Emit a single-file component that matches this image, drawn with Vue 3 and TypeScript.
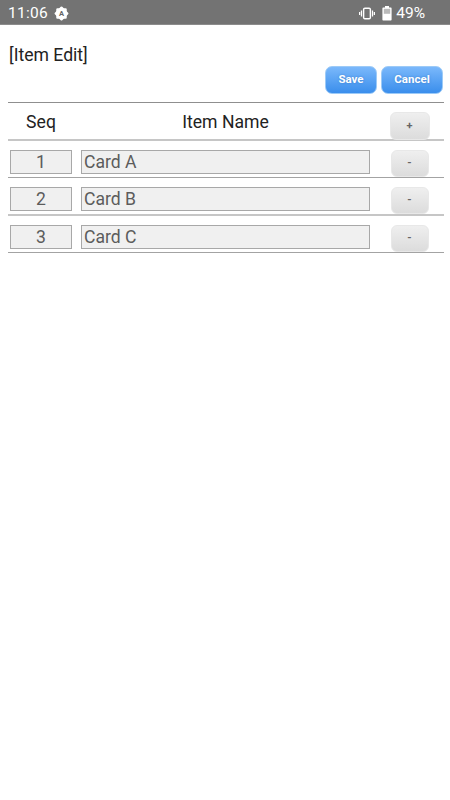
<script setup lang="ts">
const items = [
  { seq: 1, name: 'Card A' },
  { seq: 2, name: 'Card B' },
  { seq: 3, name: 'Card C' },
]
</script>

<template>
  <div class="page">
    <div class="status">
      <div class="status-left">
        <span class="time">11:06</span>
        <svg class="auto" viewBox="0 0 16 16" width="15" height="15">
          <rect x="2.4" y="2.4" width="11.2" height="11.2" rx="1.2" fill="#fff" />
          <rect x="2.4" y="2.4" width="11.2" height="11.2" rx="1.2" fill="#fff" transform="rotate(45 8 8)" />
          <text x="8" y="11" text-anchor="middle" class="auto-a">A</text>
        </svg>
      </div>
      <div class="status-right">
        <svg viewBox="0 0 18 14" width="16" height="13">
          <rect x="5.2" y="1" width="7.6" height="12" rx="1.4" fill="none" stroke="#fff" stroke-width="1.6" />
          <path fill="none" stroke="#fff" stroke-width="1.4" d="M2.8 3.6v6.8M.7 5.2v3.6M15.2 3.6v6.8M17.3 5.2v3.6" />
        </svg>
        <svg class="battery" viewBox="0 0 10 15" width="10" height="15">
          <path fill="#fff" d="M3 0h4v1.4h1.6c.6 0 1 .4 1 1v11.2c0 .6-.4 1-1 1H1.4c-.6 0-1-.4-1-1V2.4c0-.6.4-1 1-1H3z" />
          <path fill="#757575" opacity=".5" d="M1.8 2.8h6.4v5H1.8z" />
        </svg>
        <span class="pct">49%</span>
      </div>
    </div>

    <div class="content">
      <div class="title">[Item Edit]</div>
      <div class="actions">
        <button class="blue save">Save</button>
        <button class="blue cancel">Cancel</button>
      </div>

      <div class="table">
        <div class="row head">
          <div class="seq-col">Seq</div>
          <div class="name-col">Item Name</div>
          <div class="btn-col"><button class="grey plus">+</button></div>
        </div>
        <div v-for="item in items" :key="item.seq" class="row">
          <div class="seq-col"><div class="field seq">{{ item.seq }}</div></div>
          <div class="name-col"><div class="field name">{{ item.name }}</div></div>
          <div class="btn-col"><button class="grey">-</button></div>
        </div>
      </div>
    </div>
  </div>
</template>

<style>
html, body { margin: 0; background: #fff; }
</style>

<style scoped>
.page {
  width: 450px;
  height: 800px;
  background: #fff;
  font-family: Roboto, "Liberation Sans", sans-serif;
  color: #222;
  overflow: hidden;
}
.status {
  height: 25px;
  box-sizing: border-box;
  background: #737373;
  border-bottom: 1px solid #8c8c8c;
  color: #fff;
  display: flex;
  justify-content: space-between;
  align-items: center;
  padding: 3px 25px 1px 8px;
}
.status-left, .status-right { display: flex; align-items: center; }
.time { font-size: 15.5px; letter-spacing: 0.3px; }
.auto { margin-left: 6px; }
.auto-a { font-size: 8px; font-weight: 700; fill: #666; font-family: Roboto, sans-serif; }
.battery { margin-left: 7px; }
.pct { font-size: 15.5px; margin-left: 4px; }
.content { padding: 0 7px 0 8px; }
.title { font-size: 17.6px; line-height: 20px; padding-top: 20px; padding-left: 1px; }
.actions {
  display: flex;
  justify-content: flex-end;
  gap: 4px;
  margin-top: 1px;
  height: 28px;
}
.blue {
  box-sizing: border-box;
  height: 28px;
  border: 1px solid #9ccaf7;
  border-radius: 7px;
  background: linear-gradient(#7ab8fb, #3a8eec);
  color: #fff;
  font-family: Roboto, sans-serif;
  font-size: 11.5px;
  font-weight: 700;
  padding: 0 0 2px;
  text-shadow: 0 0 2px rgba(30, 90, 170, .5);
}
.save { width: 52px; }
.cancel { width: 62px; }
.table {
  margin-top: 8px;
  width: 436px;
  border-top: 1px solid #8f8f8f;
}
.row {
  display: flex;
  box-sizing: border-box;
  height: 37px;
  border-bottom: 1px solid #a3a3a3;
  align-items: flex-start;
}
.row.head { height: 38px; font-size: 17.6px; border-bottom: 2px solid #c6c6c6; }
.row:nth-child(3) { height: 38px; border-bottom: 2px solid #c6c6c6; }
.seq-col { width: 66px; flex: none; text-align: center; }
.name-col { flex: none; width: 309px; text-align: center; }
.btn-col { flex: none; width: 61px; display: flex; justify-content: center; padding-right: 8px; box-sizing: border-box; }
.head .seq-col { padding-top: 9px; line-height: 20px; }
.head .name-col { padding-top: 9px; line-height: 20px; padding-right: 6px; box-sizing: border-box; }
.field {
  box-sizing: border-box;
  height: 24px;
  margin-top: 9px;
  border: 1px solid #a8a8a8;
  background: #f0f0f0;
  color: #5c5c5c;
  font-size: 17.6px;
  line-height: 22px;
}
.seq { width: 62px; margin-left: 2px; text-align: center; }
.name { width: 289px; margin-left: 7px; text-align: left; padding-left: 2px; }
.grey {
  box-sizing: border-box;
  width: 38px;
  height: 27px;
  margin-top: 9px;
  border: 1px solid #e8e8e8;
  border-radius: 6px;
  background: linear-gradient(#efefef, #dcdcdc);
  color: #666;
  font-family: Roboto, sans-serif;
  font-size: 11px;
  font-weight: 700;
  padding: 0 0 2px;
}
.plus { width: 40px; height: 28px; }
</style>
